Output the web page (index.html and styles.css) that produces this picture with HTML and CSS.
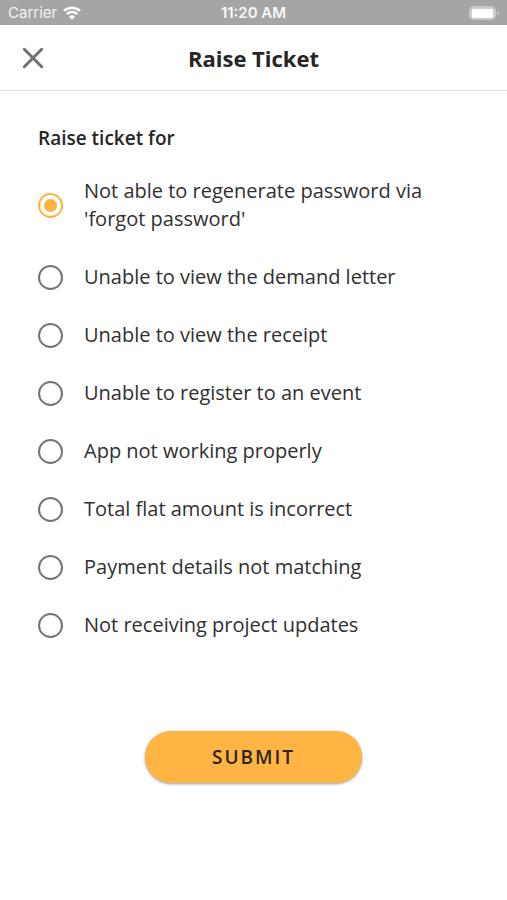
FILE: index.html
```html
<!DOCTYPE html>
<html lang="en">
<head>
<meta charset="utf-8">
<meta name="viewport" content="width=device-width, initial-scale=1">
<title>Raise Ticket</title>
<link rel="stylesheet" href="styles.css">
</head>
<body>
<div class="status">
  <div class="carrier"><span>Carrier</span>
    <svg class="wifi" viewBox="0 0 18 14" aria-hidden="true"><path d="M1 4.9a11.5 11.5 0 0 1 16 0M3.9 8a7.4 7.4 0 0 1 10.2 0"/><path class="solid" d="M9 13.8 5.8 10.6a4.6 4.6 0 0 1 6.4 0z"/></svg>
  </div>
  <div class="time">11:20 AM</div>
  <svg class="battery" viewBox="0 0 30 14" aria-hidden="true"><rect class="shell" x="1" y="1" width="25" height="12" rx="4"/><rect class="charge" x="2.5" y="2.5" width="22" height="9.5" rx="2"/><path class="tip" d="M28 5q2 .6 2 2t-2 2z"/></svg>
</div>
<header class="bar">
  <button class="close" type="button" aria-label="Close"><svg viewBox="0 0 22 22" aria-hidden="true"><path d="M2.300 2.300l17.400 17.400M19.700 2.300L2.300 19.700"/></svg></button>
  <h1>Raise Ticket</h1>
</header>
<form class="form">
  <fieldset>
    <legend>Raise ticket for</legend>
    <label><input type="radio" name="issue" checked><span>Not able to regenerate password via 'forgot password'</span></label>
    <label><input type="radio" name="issue"><span>Unable to view the demand letter</span></label>
    <label><input type="radio" name="issue"><span>Unable to view the receipt</span></label>
    <label><input type="radio" name="issue"><span>Unable to register to an event</span></label>
    <label><input type="radio" name="issue"><span>App not working properly</span></label>
    <label><input type="radio" name="issue"><span>Total flat amount is incorrect</span></label>
    <label><input type="radio" name="issue"><span>Payment details not matching</span></label>
    <label><input type="radio" name="issue"><span>Not receiving project updates</span></label>
  </fieldset>
  <button class="submit" type="button">SUBMIT</button>
</form>
</body>
</html>
```
FILE: styles.css
```css
* { box-sizing: border-box; }
body { margin: 0; background: #fff; color: #262626; font-family: "Open Sans", sans-serif; }
.status { display: grid; grid-template-columns: 1fr auto 1fr; align-items: center; height: 25px; padding: 0 8px; background: #a5a5a5; color: #fff; font: 15px/26px Inter, sans-serif; }
.carrier { display: flex; align-items: center; gap: 6px; color: #f2f2f2; }
.time { font-weight: 600; color: #f8f8f8; }
.wifi { width: 18px; height: 14px; fill: none; stroke: #fff; stroke-width: 2.5; }
.wifi .solid { fill: #fff; stroke: none; }
.battery { width: 30px; height: 14px; justify-self: end; }
.shell { fill: none; stroke: #c8c8c8; stroke-width: 2; }
.charge { fill: #fff; }
.tip { fill: #c8c8c8; }
.bar { display: grid; grid-template-columns: 48px 1fr 48px; align-items: center; height: 66px; padding: 0 9px; border-bottom: 1px solid #dedede; }
.bar h1 { margin: 0; text-align: center; font-size: 22px; line-height: 30px; font-weight: 700; }
.close { display: flex; align-items: center; justify-content: center; width: 48px; height: 48px; padding: 0; border: 0; background: none; }
.close svg { width: 22px; height: 22px; fill: none; stroke: #707070; stroke-width: 3; stroke-linecap: round; }
.form { display: flex; flex-direction: column; align-items: center; padding: 33px 38px; }
fieldset { display: flex; flex-direction: column; gap: 30px; width: 100%; margin: 0; padding: 0; border: 0; }
legend { padding: 0; margin-bottom: 25px; font-size: 19px; line-height: 28px; font-weight: 600; }
label { display: flex; align-items: center; gap: 21px; color: #303030; font-size: 20px; line-height: 28px; }
label span { max-width: 350px; }
input { appearance: none; flex: none; width: 25px; height: 25px; margin: 0; border: 2px solid #757575; border-radius: 50%; }
input:checked { border-color: #ffb340; background: radial-gradient(circle, #ffb340 6px, transparent 7px); }
.submit { width: 217px; height: 52px; margin-top: 92px; padding: 0; border: 0; border-radius: 26px; background: #ffb444; color: #2c2416; box-shadow: 0 1px 3px #0006; font: 600 19px/28px "Open Sans", sans-serif; letter-spacing: 2px; }
```
